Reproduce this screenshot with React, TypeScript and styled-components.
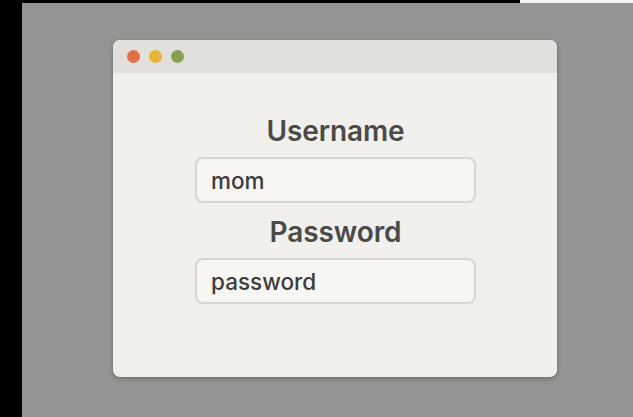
import React from 'react';
import styled, { createGlobalStyle } from 'styled-components';

const GlobalStyle = createGlobalStyle`
  html, body {
    margin: 0;
    padding: 0;
    width: 633px;
    height: 417px;
    overflow: hidden;
    background: #000;
  }
  #root {
    height: 100%;
  }
`;

const s = {
  Page: styled.div`
    display: flex;
    width: 633px;
    height: 417px;
    font-family: Inter, 'Liberation Sans', sans-serif;
  `,
  Gutter: styled.div`
    width: 22px;
    flex-shrink: 0;
    background: #000;
  `,
  Column: styled.div`
    flex: 1;
    display: flex;
    flex-direction: column;
  `,
  TopStrip: styled.div`
    height: 3px;
    display: flex;
  `,
  StripPart: styled.div<{ $w?: number; $color: string }>`
    ${(p) => (p.$w ? `width: ${p.$w}px;` : 'flex: 1;')}
    background: ${(p) => p.$color};
  `,
  Stage: styled.div`
    flex: 1;
    background: #959493;
    padding: 37px 76px 40px 91px;
    display: flex;
  `,
  Window: styled.div`
    flex: 1;
    display: flex;
    flex-direction: column;
    border-radius: 7px;
    overflow: hidden;
    background: #f1f0ec;
    box-shadow: 0 2px 5px rgba(0, 0, 0, 0.25), 0 0 1px rgba(0, 0, 0, 0.2);
  `,
  TitleBar: styled.div`
    height: 33px;
    display: flex;
    align-items: center;
    gap: 9px;
    padding-left: 14px;
    background: #e1e0dc;
  `,
  Dot: styled.span<{ $color: string }>`
    width: 13px;
    height: 13px;
    border-radius: 50%;
    background: ${(p) => p.$color};
  `,
  Form: styled.div`
    display: flex;
    flex-direction: column;
    align-items: center;
    padding-top: 42px;
    padding-left: 1px;
  `,
  Label: styled.div`
    font-size: 28px;
    line-height: 32px;
    font-weight: 600;
    color: #4a4a4a;
    letter-spacing: -0.1px;
    margin-bottom: 10px;
  `,
  Field: styled.div`
    box-sizing: border-box;
    width: 281px;
    height: 46px;
    display: flex;
    align-items: center;
    padding-left: 14px;
    border: 2px solid #d8d6d1;
    border-radius: 8px;
    background: #f7f6f3;
    font-size: 22.5px;
    font-weight: 500;
    color: #3d3d3d;
    margin-bottom: 13px;
  `,
};

const App = (): JSX.Element => {
  return (
    <s.Page>
      <GlobalStyle />
      <s.Gutter />
      <s.Column>
        <s.TopStrip>
          <s.StripPart $w={498} $color="#000" />
          <s.StripPart $color="#f4f4f4" />
        </s.TopStrip>
        <s.Stage>
          <s.Window>
            <s.TitleBar>
              <s.Dot $color="#e0704a" />
              <s.Dot $color="#eab536" />
              <s.Dot $color="#87a055" />
            </s.TitleBar>
            <s.Form>
              <s.Label children="Username" />
              <s.Field children="mom" />
              <s.Label children="Password" />
              <s.Field children="password" />
            </s.Form>
          </s.Window>
        </s.Stage>
      </s.Column>
    </s.Page>
  );
};

export default App;
